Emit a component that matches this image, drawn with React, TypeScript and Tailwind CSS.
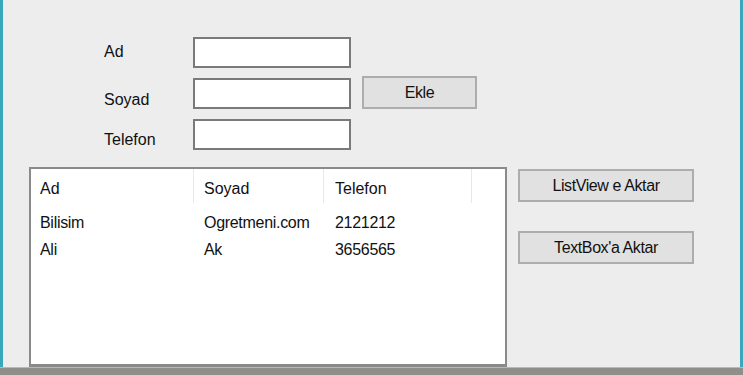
const rows = [
  ['Bilisim', 'Ogretmeni.com', '2121212'],
  ['Ali', 'Ak', '3656565'],
]

function Field({ label, mt, lp }: { label: string; mt: string; lp: string }) {
  return (
    <div className={`flex items-start h-[31px] ${mt}`}>
      <span className={`w-[90px] pl-[1px] text-[16px] leading-[18px] ${lp}`}>{label}</span>
      <div className="w-[158px] h-[31px] bg-white border-2 border-[#7a7a7a]" />
    </div>
  )
}

function WinButton({ children, className }: { children: React.ReactNode; className: string }) {
  return (
    <div className={`flex items-center justify-center bg-[#e1e1e1] border-2 border-[#adadad] text-[16px] tracking-[-0.4px] ${className}`}>
      {children}
    </div>
  )
}

export default function App() {
  return (
    <div className="w-[743px] h-[375px] flex flex-col bg-[#ededed] text-[#111]" style={{ fontFamily: '"Liberation Sans", Arial, sans-serif' }}>
      <div className="flex-1 flex border-l-[3px] border-l-[#3aa8b8] border-r-[3px] border-r-[#3aa8b8]">
        <div className="flex-1 flex flex-col pl-[26px] pt-[37px]">
          <div className="flex items-start pl-[74px]">
            <div className="flex flex-col">
              <Field label="Ad" mt="mt-0" lp="pt-[6px]" />
              <Field label="Soyad" mt="mt-[10px]" lp="pt-[13px]" />
              <Field label="Telefon" mt="mt-[10px]" lp="pt-[12px]" />
            </div>
            <WinButton className="ml-[11px] mt-[39px] w-[115px] h-[33px]">Ekle</WinButton>
          </div>
          <div className="flex items-start mt-[17px]">
            <div className="w-[478px] h-[200px] bg-white border-2 border-[#8a8a8a] border-b-[3px]">
              <div className="flex h-[40px] text-[16px]">
                <div className="w-[163px] pl-[9px] pt-[8px] border-r border-[#e8e8e8] h-[34px]">Ad</div>
                <div className="w-[130px] pl-[10px] pt-[8px] border-r border-[#e8e8e8] h-[34px]">Soyad</div>
                <div className="w-[148px] pl-[11px] pt-[8px] border-r border-[#e8e8e8] h-[34px]">Telefon</div>
              </div>
              {rows.map(r => (
                <div key={r[0]} className="flex h-[27px] items-center text-[16px] tracking-[-0.3px]">
                  <div className="w-[163px] pl-[9px]">{r[0]}</div>
                  <div className="w-[130px] pl-[10px]">{r[1]}</div>
                  <div className="w-[148px] pl-[11px]">{r[2]}</div>
                </div>
              ))}
            </div>
            <div className="flex flex-col ml-[11px] mt-[2px]">
              <WinButton className="w-[176px] h-[33px]">ListView e Aktar</WinButton>
              <WinButton className="w-[176px] h-[33px] mt-[29px]">TextBox'a Aktar</WinButton>
            </div>
          </div>
        </div>
      </div>
      <div className="h-[9px] bg-[#8e8e8a] border-t border-[#b8b8b4]" />
    </div>
  )
}
